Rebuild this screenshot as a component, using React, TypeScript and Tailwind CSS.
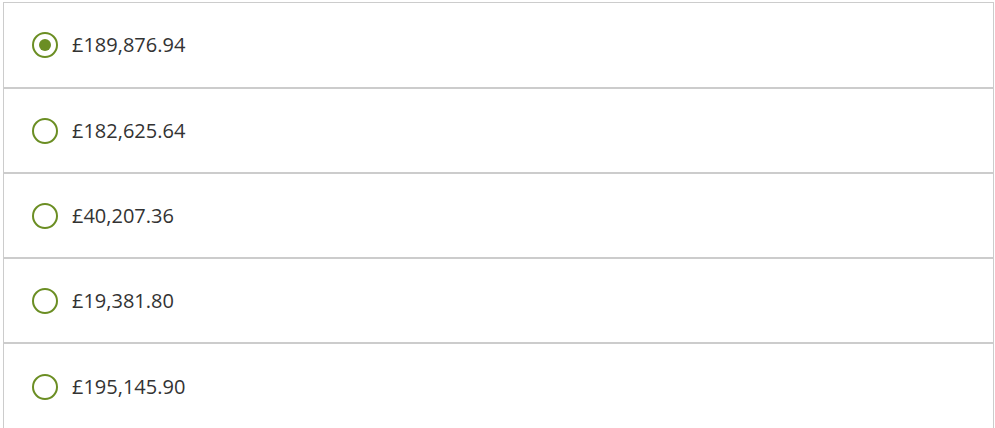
const options = ['£189,876.94', '£182,625.64', '£40,207.36', '£19,381.80', '£195,145.90'];

export default function App() {
  const selected = 0;
  return (
    <div className="min-h-screen bg-white pt-[2px] pl-[3px] pr-[1px]" style={{ fontFamily: '"Open Sans", sans-serif' }}>
      <div className="border-x border-[#cccccc]">
        {options.map((value, i) => (
          <label
            key={value}
            className="flex items-center h-[85px] first:h-[86px] last:h-[87px] border-y border-[#cccccc] pl-[28px] gap-[14px] cursor-pointer"
          >
            <span className="flex items-center justify-center w-[26px] h-[26px] rounded-full border-2 border-[#6b8e23]">
              {i === selected && <span className="w-[12px] h-[12px] rounded-full bg-[#6b8e23]" />}
            </span>
            <span className="text-[20px] text-[#333333]">{value}</span>
          </label>
        ))}
      </div>
    </div>
  );
}
